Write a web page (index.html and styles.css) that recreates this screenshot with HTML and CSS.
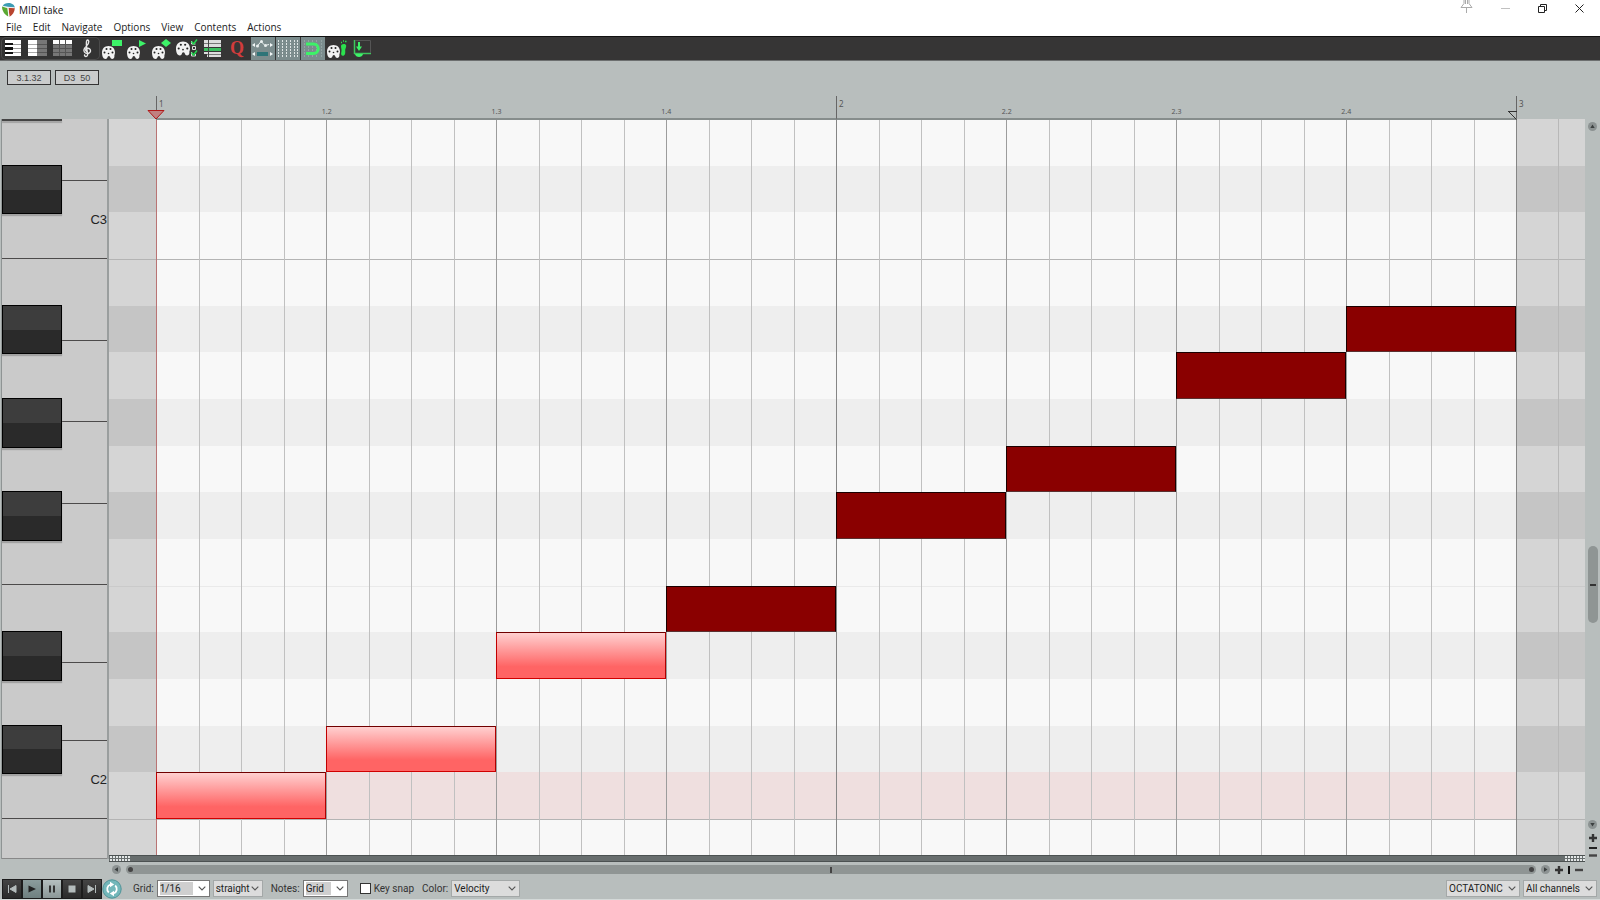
FILE: index.html
```html
<!DOCTYPE html>
<html lang="en">
<head>
    <meta charset="UTF-8">
    <meta name="viewport" content="width=device-width, initial-scale=1.0">
    <title>MIDI take</title>
    <link rel="stylesheet" href="styles.css">
</head>
<body>
    <!-- shared shapes -->
    <svg class="defs" width="0" height="0" aria-hidden="true">
        <symbol id="palette" viewBox="0 0 13 13">
            <path fill="#f2f2f2" d="M6.500 0C10.500 0 13 2.800 13 6.500c0 1.200-.3 2-.6 2.800.2 1.700-.2 3.700-2 3.700-1.600 0-2-1.200-2.400-2.300-.4-.9-1.900-.9-2.300 0C5.300 11.800 5 13 3.500 13 1 13 0 9.500 0 6.500 0 2.800 2.500 0 6.500 0z"/>
            <g fill="#222"><circle cx="4.500" cy="3" r="1"/><circle cx="8.500" cy="3" r="1"/><circle cx="2.500" cy="6.500" r="1"/><circle cx="10.500" cy="6.500" r="1"/><circle cx="6.500" cy="7.500" r=".8"/></g>
        </symbol>
        <symbol id="chevron" viewBox="0 0 8 5">
            <path d="M.7.700 4 4 7.300.7" fill="none" stroke="#555" stroke-width="1.100"/>
        </symbol>
    </svg>

    <header class="titlebar">
        <div class="title">
            <svg width="13" height="14" viewBox="0 0 13 14" aria-hidden="true">
                <path fill="#3c9cb4" d="M.5 3.500C1.500.8 4 0 6.500 0c3 0 6 1.500 6.500 4.800L6 4z"/>
                <path fill="#5aa832" d="M0 3.500 5.500 5l.8 8.500C2.500 11.500 0 8 0 3.500z"/>
                <path fill="#b8442f" d="M6.300 4.800 12.800 5c0 4-2.300 7-5.300 8.700z"/>
                <path d="M.8 3.300 6 4.300l6.800.5M6 4.300l.9 9" fill="none" stroke="#f4f4f4" stroke-width=".9"/>
            </svg>
            <h1>MIDI take</h1>
        </div>
        <div class="window-buttons">
            <button aria-label="Pin">
                <svg width="13" height="14" viewBox="0 0 13 14"><path d="M4 0v3.500L1 7.500h11L9 3.500V0M5.500 0v4M7.500 0v4M6.500 8v5" fill="none" stroke="#aaa"/></svg>
            </button>
            <button aria-label="Minimize">
                <svg width="9" height="9" viewBox="0 0 9 9"><path d="M0 4.500h9" stroke="#c0c0c0"/></svg>
            </button>
            <button aria-label="Restore">
                <svg width="9" height="9" viewBox="0 0 9 9"><path d="M.5 2.500h6v6h-6zM2.500 2V.500h6v6H7" fill="none" stroke="#222"/></svg>
            </button>
            <button aria-label="Close">
                <svg width="9" height="9" viewBox="0 0 9 9"><path d="M.5.500l8 8M8.500.500l-8 8" stroke="#222"/></svg>
            </button>
        </div>
    </header>

    <nav class="menu">
        <a href="#">File</a>
        <a href="#">Edit</a>
        <a href="#">Navigate</a>
        <a href="#">Options</a>
        <a href="#">View</a>
        <a href="#">Contents</a>
        <a href="#">Actions</a>
    </nav>

    <div class="toolbar">
        <div class="tool-group">
            <button aria-label="Piano roll">
                <svg width="24" height="24" viewBox="0 0 24 24"><path fill="#fff" d="M4 3h16v16H4z"/><path d="M4 7.500h16M4 11.500h16M4 15.500h16" stroke="#999"/><path fill="#111" d="M4 6h8v2H4zM4 10h8v3H4zM4 15h8v2H4z"/></svg>
            </button>
            <button aria-label="Named notes">
                <svg width="24" height="24" viewBox="0 0 24 24"><path fill="#fff" d="M2 3h9v16H2z"/><path fill="#777" d="M11 3h10v16H11z"/><path d="M2 7.500h9M2 11.500h9M2 15.500h9" stroke="#aaa"/><path d="M11 7.500h10M11 11.500h10M11 15.500h10" stroke="#555"/></svg>
            </button>
            <button aria-label="Event list">
                <svg width="24" height="24" viewBox="0 0 24 24"><path fill="#fff" d="M2 3h19v4H2z"/><path fill="#777" d="M2 7h19v12H2z"/><path d="M2 7.500h19M2 11.500h19M2 15.500h19M8.500 3v16M14.500 3v16" stroke="#555"/></svg>
            </button>
            <button aria-label="Musical notation">
                <svg width="24" height="24" viewBox="0 0 24 24"><path d="M10.500 14.500c-1.500-.8-1-3 .8-3.200 2-.2 3.400 1.200 3.200 2.900-.3 1.900-2.800 2.900-4.700 2-2.300-1-2.400-3.700-.8-5.500 1.600-1.800 4-3.500 3.800-6.200-.2-2-1.500-2-2.200-.5-.8 2 .4 9 .9 12.500.3 2-.4 3-1.500 3-1 0-1.600-.7-1.400-1.500" fill="none" stroke="#e8e8e8" stroke-width="1.400" stroke-linecap="round"/></svg>
            </button>
        </div>
        <button aria-label="Color notes">
            <svg width="24" height="24" viewBox="0 0 24 24"><use href="#palette" x="1" y="9" width="13" height="13"/><path fill="#3df268" d="M11 3h10v6H11z"/></svg>
        </button>
        <button aria-label="Color by take">
            <svg width="24" height="24" viewBox="0 0 24 24"><use href="#palette" x="1" y="9" width="13" height="13"/><path fill="#3df268" d="M13 3l7 3.500-7 3.500z"/></svg>
        </button>
        <button aria-label="Color by velocity">
            <svg width="24" height="24" viewBox="0 0 24 24"><use href="#palette" x="1" y="9" width="13" height="13"/><path fill="#3df268" d="M15 2l5 4-5 4-5-4z"/></svg>
        </button>
        <button aria-label="Color options">
            <svg width="24" height="24" viewBox="0 0 24 24"><use href="#palette" x="0" y="4" width="14" height="15"/><path d="M16.500 9.500h3v3h-3zM15.500 15v4h4v-2M15.500 4v3h4" fill="none" stroke="#ddd"/><path d="M15.500 4.500l2 2.500L21 2.500M15.500 15.500l2 2.500 3.500-4.500" fill="none" stroke="#25d750" stroke-width="1.500"/></svg>
        </button>
        <button aria-label="Note rows">
            <svg width="24" height="24" viewBox="0 0 24 24"><path fill="#ddd" d="M3 3h17v3H3zM3 7h17v3H3zM3 15h17v2H3zM6 17h14v3H6z"/><path fill="#3cbf60" d="M3 11h17v3H3z"/><path d="M3 6.500h17M6 17.500h14" stroke="#777"/><path d="M7.500 3v17" stroke="#444"/></svg>
        </button>
        <button class="quantize" aria-label="Quantize">Q</button>
        <button class="active" aria-label="Envelope lanes">
            <svg width="24" height="24" viewBox="0 0 24 24"><path d="M6 9.500l4-5 4 4 4-1" fill="none" stroke="#e8eeee"/><circle cx="6.500" cy="9" r="1.500" fill="#e8eeee"/><circle cx="10.500" cy="4.500" r="1.500" fill="#e8eeee"/><circle cx="14.500" cy="8.500" r="1.500" fill="#e8eeee"/><path fill="#f4f8f8" d="M1 8l3-2v4zM22 8l-3-2v4zM1 17l3-2v4zM22 17l-3-2v4z"/><path fill="#2d7478" d="M6 15h11v4H6z"/></svg>
        </button>
        <button class="active" aria-label="Grid">
            <svg width="24" height="24" viewBox="0 0 24 24"><path d="M2.500 3v18M6.500 3v18M10.500 3v18M14.500 3v18M18.500 3v18M21.500 3v18" stroke="#dde4e4" stroke-dasharray="2 1"/></svg>
        </button>
        <button class="active" aria-label="Snap">
            <svg width="24" height="24" viewBox="0 0 24 24"><path d="M3.500 3v18M7.500 3v18M11.500 3v18M15.500 3v18M20.500 3v18" stroke="#93a4a4" stroke-dasharray="2 1"/><path d="M5 7h7.500a4.700 4.700 0 0 1 0 9.500H5" fill="none" stroke="#3df268" stroke-width="3"/></svg>
        </button>
        <button aria-label="Step color">
            <svg width="24" height="24" viewBox="0 0 24 24"><use href="#palette" x="1" y="8" width="13" height="13"/><path fill="#2be04e" d="M15 9c0-2.500 5-3 5.200-.3.100 2-1.200 3-1 5 .3 2.500-.2 5-2.200 5.100-2 0-2.200-2-1.600-4 .5-2-.4-3.800-.4-5.800z"/><path d="M15 5.500h1M17 4h1M19 4.500h1.500" stroke="#2be04e" stroke-width="1.500"/></svg>
        </button>
        <button aria-label="Step input">
            <svg width="24" height="24" viewBox="0 0 24 24"><path d="M3.500 3v14M3 16.500h17" stroke="#3cc85c" stroke-width="1.500"/><path d="M4 3.500h15.500V16" fill="none" stroke="#555"/><path d="M8 5v5" stroke="#3df268" stroke-width="2"/><path fill="#3df268" d="M5 9.500h6L8 14zM4 17h8c-.5 4-7.500 4-8 0z"/></svg>
        </button>
    </div>

    <div class="info">
        <output>3.1.32</output>
        <output>D3&nbsp; 50</output>
    </div>

    <div class="ruler">
        <div class="bar first">
            <svg class="marker" width="18" height="10" viewBox="0 0 18 10" aria-hidden="true"><path d="M1 .500h16L9 9z" fill="#c08080" stroke="#b01818"/></svg>
            <span class="bar-no">1</span>
            <span class="beat-no">1.2</span>
            <span class="beat-no">1.3</span>
            <span class="beat-no">1.4</span>
        </div>
        <div class="bar">
            <span class="bar-no">2</span>
            <span class="beat-no">2.2</span>
            <span class="beat-no">2.3</span>
            <span class="beat-no">2.4</span>
        </div>
        <div class="bar last">
            <svg class="marker end" width="9" height="9" viewBox="0 0 9 9" aria-hidden="true"><path d="M0 .500h9M.5.500l8 8" fill="none" stroke="#333"/></svg>
            <span class="bar-no">3</span>
        </div>
    </div>

    <main class="editor">
        <div class="keyboard">
            <div class="white-keys">
                <div class="key d top"></div>
                <div class="key c">C3</div>
                <div class="key b"></div>
                <div class="key b"></div>
                <div class="key b"></div>
                <div class="key b"></div>
                <div class="key d"></div>
                <div class="key d"></div>
                <div class="key c">C2</div>
                <div class="key rest"></div>
            </div>
            <div class="black-keys">
                <i class="row-1 stub"></i>
                <i class="row-2"></i>
                <i class="row-5"></i>
                <i class="row-7"></i>
                <i class="row-9"></i>
                <i class="row-12"></i>
                <i class="row-14"></i>
            </div>
        </div>

        <div class="roll">
            <div class="lanes">
                <div class="lane"></div>
                <div class="lane sharp"></div>
                <div class="lane"></div>
                <div class="lane octave"></div>
                <div class="lane sharp"></div>
                <div class="lane"></div>
                <div class="lane sharp"></div>
                <div class="lane"></div>
                <div class="lane sharp"></div>
                <div class="lane"></div>
                <div class="lane split"></div>
                <div class="lane sharp"></div>
                <div class="lane"></div>
                <div class="lane sharp"></div>
                <div class="lane root"><span></span></div>
                <div class="lane octave"></div>
            </div>
            <div class="beats">
                <div class="beat cursor"><i></i><i></i><i></i><i></i></div>
                <div class="beat"><i></i><i></i><i></i><i></i></div>
                <div class="beat"><i></i><i></i><i></i><i></i></div>
                <div class="beat"><i></i><i></i><i></i><i></i></div>
                <div class="beat measure"><i></i><i></i><i></i><i></i></div>
                <div class="beat"><i></i><i></i><i></i><i></i></div>
                <div class="beat"><i></i><i></i><i></i><i></i></div>
                <div class="beat"><i></i><i></i><i></i><i></i></div>
                <div class="beat measure tail"><i></i><i></i></div>
            </div>
            <div class="notes">
                <div class="note selected row-15 beat-1"></div>
                <div class="note selected row-14 beat-2"></div>
                <div class="note selected row-12 beat-3"></div>
                <div class="note row-11 beat-4"></div>
                <div class="note row-9 beat-5"></div>
                <div class="note row-8 beat-6"></div>
                <div class="note row-6 beat-7"></div>
                <div class="note row-5 beat-8"></div>
            </div>
        </div>

        <div class="vscroll">
            <button class="round" aria-label="Scroll up"><svg width="9" height="9" viewBox="0 0 9 9"><path d="M4.500 2.500l2.200 3.500H2.300z" fill="#3c4040"/></svg></button>
            <div class="vtrack"><div class="vthumb"></div></div>
            <button class="round" aria-label="Scroll down"><svg width="9" height="9" viewBox="0 0 9 9"><path d="M4.500 6.500l2.200-3.500H2.300z" fill="#3c4040"/></svg></button>
            <button aria-label="Zoom in vertically"><svg width="8" height="8" viewBox="0 0 8 8"><path d="M4 0v8M0 4h8" stroke="#333" stroke-width="2.400"/></svg></button>
            <i class="hbar"></i>
            <button aria-label="Zoom out vertically"><svg width="8" height="3" viewBox="0 0 8 3"><path d="M0 1.500h8" stroke="#444" stroke-width="2.400"/></svg></button>
        </div>

        <div class="divider"><i></i><i></i></div>
    </main>

    <div class="hscroll">
        <button class="round" aria-label="Scroll left"><svg width="9" height="9" viewBox="0 0 9 9"><path d="M2.500 4.500L6 2.300v4.400z" fill="#3c4040"/></svg></button>
        <div class="hthumb"><i class="dot"></i><i class="mid"></i><i class="dot"></i></div>
        <button class="round" aria-label="Scroll right"><svg width="9" height="9" viewBox="0 0 9 9"><path d="M6.500 4.500L3 2.300v4.400z" fill="#3c4040"/></svg></button>
        <button aria-label="Zoom in"><svg width="8" height="8" viewBox="0 0 8 8"><path d="M4 0v8M0 4h8" stroke="#333" stroke-width="2.400"/></svg></button>
        <i class="vbar"></i>
        <button aria-label="Zoom out"><svg width="8" height="8" viewBox="0 0 8 8"><path d="M0 4h8" stroke="#444" stroke-width="2.400"/></svg></button>
    </div>

    <footer class="bottom">
        <div class="transport">
            <button aria-label="Go to start"><svg width="10" height="10" viewBox="0 0 10 10"><path d="M1.500 1v8M9 1.500v7L3 5z" fill="#b4bcbc" stroke="#b4bcbc"/></svg></button>
            <button class="lit" aria-label="Play"><svg width="10" height="10" viewBox="0 0 10 10"><path d="M1.500 1.500v7L9 5z" fill="#222"/></svg></button>
            <button class="lit light" aria-label="Pause"><svg width="10" height="10" viewBox="0 0 10 10"><path d="M3 1.500v7M7 1.500v7" stroke="#333" stroke-width="2"/></svg></button>
            <button aria-label="Stop"><svg width="10" height="10" viewBox="0 0 10 10"><path d="M1.500 1.500h7v7h-7z" fill="#b4bcbc"/></svg></button>
            <button aria-label="Go to end"><svg width="10" height="10" viewBox="0 0 10 10"><path d="M8.500 1v8M1 1.500v7L7 5z" fill="#b4bcbc" stroke="#b4bcbc"/></svg></button>
            <button class="repeat" aria-label="Repeat"><svg width="20" height="20" viewBox="0 0 20 20"><circle cx="10" cy="10" r="9.200" fill="#73b7ba" stroke="#4f9498"/><path d="M6.800 13.500A4.700 4.700 0 0 1 8.500 5.500M13.200 6.500A4.700 4.700 0 0 1 11.500 14.500" fill="none" stroke="#fff" stroke-width="1.800"/><path fill="#fff" d="M8 2.800l4.200 2.600L8 8.200zM12 17.200l-4.200-2.600L12 11.800z"/></svg></button>
        </div>

        <label for="grid">Grid:</label>
        <span class="select white w-grid"><select id="grid"><option>1/16</option></select><svg><use href="#chevron"/></svg></span>
        <span class="select w-type"><select aria-label="Grid type"><option>straight</option></select><svg><use href="#chevron"/></svg></span>
        <label class="notes-label" for="length">Notes:</label>
        <span class="select white w-notes"><select id="length"><option>Grid</option></select><svg><use href="#chevron"/></svg></span>
        <input type="checkbox" id="keysnap">
        <label for="keysnap">Key snap</label>
        <label class="color-label" for="color">Color:</label>
        <span class="select w-color"><select id="color"><option>Velocity</option></select><svg><use href="#chevron"/></svg></span>

        <span class="select scale w-scale"><select aria-label="Scale"><option>OCTATONIC</option></select><svg><use href="#chevron"/></svg></span>
        <span class="select w-channel"><select aria-label="Channel"><option>All channels</option></select><svg><use href="#chevron"/></svg></span>
    </footer>
</body>
</html>
```

FILE: styles.css
```css
:root {
    --keys: 109px;
    --lead: 47px;
    --tail: 69px;
    --side: 15px;
    --rows: repeat(15, 140fr) 108fr;
}

* {
    box-sizing: border-box;
}

body {
    margin: 0;
    min-height: 100vh;
    display: flex;
    flex-direction: column;
    background-color: #b8bebd;
    font-family: Roboto, "Liberation Sans", sans-serif;
    font-size: 10px;
    color: #222;
}

button {
    display: flex;
    align-items: center;
    justify-content: center;
    padding: 0;
    border: 0;
    background: none;
}

svg {
    display: block;
}

.defs {
    position: absolute;
}

/* Title and menu */
.titlebar {
    display: flex;
    justify-content: space-between;
    height: 20px;
    background-color: #fff;
}

.title {
    display: flex;
    align-items: center;
    gap: 4px;
    padding-left: 2px;
}

.title h1 {
    margin: 0;
    font: 10px "Open Sans", sans-serif;
    color: #111;
}

.window-buttons {
    display: flex;
    align-items: flex-start;
    gap: 28px;
    padding-right: 16px;
}

.window-buttons button {
    height: 17px;
}

.window-buttons button:first-child {
    height: 13px;
}

.menu {
    display: flex;
    gap: 11px;
    height: 16px;
    padding-left: 6px;
    background-color: #fff;
    font: 10px/15px "Open Sans", sans-serif;
}

.menu a {
    color: #222;
    text-decoration: none;
}

/* Toolbar */
.toolbar {
    display: flex;
    gap: 1px;
    height: 25px;
    padding-left: 1px;
    border-top: 1px solid #111;
    border-bottom: 1px solid #6c6f6f;
    background-color: #363535;
}

.tool-group {
    display: flex;
    gap: 1px;
    border-radius: 5px;
    background-color: #333;
    box-shadow: inset 0 0 0 1px #4b4b4b;
}

.toolbar button {
    width: 24px;
    height: 23px;
}

.toolbar .active {
    background-color: #7b8c8d;
}

.toolbar .quantize {
    padding-right: 2px;
    font: bold 18px "Liberation Serif", serif;
    color: #d23c3c;
}

/* Position readout */
.info {
    display: flex;
    gap: 4px;
    padding: 9px 7px 0;
    height: 35px;
}

.info output {
    width: 44px;
    height: 15px;
    border: 1px solid #333;
    background-color: #cacccc;
    font: 9px/14px "Liberation Sans", sans-serif;
    text-align: center;
    color: #444;
}

/* Ruler */
.ruler {
    display: grid;
    grid-template-columns: 1fr 1fr calc(var(--tail) + var(--side));
    height: 23px;
    margin-left: calc(var(--keys) + var(--lead));
    font: 8px "Noto Sans", sans-serif;
    color: #555;
}

.bar {
    position: relative;
    display: grid;
    grid-template-columns: repeat(4, 1fr);
    border-left: 1px solid #666;
    border-bottom: 2px solid #868d8c;
}

.bar.last {
    border-bottom-color: transparent;
}

.bar-no {
    padding-left: 2px;
    line-height: 16px;
}

.beat-no {
    justify-self: start;
    transform: translateX(-50%);
    padding-top: 10px;
    font-size: 7px;
    line-height: 12px;
}

.marker {
    position: absolute;
    left: -10px;
    bottom: -2px;
}

.marker.end {
    left: -9px;
}

/* Editor */
.editor {
    flex: 1;
    display: grid;
    grid-template-columns: var(--keys) 1fr var(--side);
    grid-template-rows: 1fr 7px;
}

.keyboard {
    grid-row: 1 / 3;
    display: grid;
    margin: 0 0 3px 1px;
    border-left: 1px solid #8f9494;
    border-right: 2px solid #9a9e9e;
    background-color: #cacaca;
}

.white-keys,
.black-keys {
    grid-area: 1 / 1;
}

.white-keys {
    display: flex;
    flex-direction: column;
}

.key {
    display: flex;
    align-items: center;
    justify-content: flex-end;
    border-top: 1px solid #4c4a4a;
    font: 13px "Liberation Sans", sans-serif;
}

.key.b {
    flex: 245 0 0;
}

.key.c {
    flex: 234 0 0;
}

.key.d {
    flex: 233 0 0;
}

.key.top {
    flex-grow: 186;
    border-top: 0;
}

.key.rest {
    flex: 120 0 0;
    border-bottom: 1px solid #888;
}

.black-keys {
    display: grid;
    width: 60px;
    grid-template-rows: repeat(15, 140fr) 120fr;
}

.black-keys i {
    margin: -1px 0 -2px;
    border: 1px solid #000;
    background: linear-gradient(#3d3d3d 50%, #2a2a2a 50%);
    box-shadow: 0 2px 1px #a2a2a2;
}

.black-keys .stub {
    height: 2px;
    margin: 0;
    border-color: #444;
}

.roll {
    display: grid;
    background-color: #f8f8f8;
}

.lanes,
.beats,
.notes {
    grid-area: 1 / 1;
    display: grid;
}

.lanes,
.notes {
    grid-template-rows: var(--rows);
}

.lane {
    display: grid;
    grid-template-columns: var(--lead) 1fr var(--tail);
}

.lane::before,
.lane::after {
    content: "";
    background-color: #d5d5d5;
}

.lane::after {
    grid-column: 3;
}

.lane.sharp {
    background-color: #eee;
}

.lane.sharp::before,
.lane.sharp::after {
    background-color: #c5c5c5;
}

.lane.octave {
    border-top: 1px solid #b4b4b4;
}

.lane.split {
    border-top: 1px solid #eaeaea;
}

.lane.split::before,
.lane.split::after {
    margin-top: -1px;
    border-top: 1px solid #cacaca;
}

.lane.root span {
    background-color: #efdfdf;
}

.beats {
    grid-template-columns: repeat(8, 1fr) var(--tail);
    margin-left: var(--lead);
}

.beat {
    display: grid;
    grid-template-columns: repeat(4, 1fr);
}

.beat i {
    border-left: 1px solid #c0c0c0;
}

.beat i:first-child {
    border-color: #9c9c9c;
}

.beat.measure i:first-child {
    border-color: #868686;
}

.beat.cursor i:first-child {
    border-color: #b97474;
}

.beat.tail {
    grid-template-columns: 42px 1fr;
}

.beat.tail i:last-child {
    border-color: #b8b8b8;
}

.notes {
    grid-template-columns: repeat(8, 1fr);
    margin: 0 var(--tail) 0 var(--lead);
}

.note {
    border: 1px solid #1a0000;
    border-bottom-color: #5a3030;
    background-color: #8a0000;
}

.note.selected {
    border-color: #700000 #b00000 #d00000 #c00000;
    background: linear-gradient(#ffd0d0, #ff6464 75%);
}

.row-1 { grid-row: 1; }
.row-2 { grid-row: 2; }
.row-5 { grid-row: 5; }
.row-6 { grid-row: 6; }
.row-7 { grid-row: 7; }
.row-8 { grid-row: 8; }
.row-9 { grid-row: 9; }
.row-11 { grid-row: 11; }
.row-12 { grid-row: 12; }
.row-14 { grid-row: 14; }
.row-15 { grid-row: 15; }

.beat-1 { grid-column: 1; }
.beat-2 { grid-column: 2; }
.beat-3 { grid-column: 3; }
.beat-4 { grid-column: 4; }
.beat-5 { grid-column: 5; }
.beat-6 { grid-column: 6; }
.beat-7 { grid-column: 7; }
.beat-8 { grid-column: 8; }

.divider {
    grid-area: 2 / 2;
    display: flex;
    justify-content: space-between;
    border-top: 1px solid #4c5252;
    border-bottom: 1px solid #4c5252;
    background-color: #686e6e;
}

.divider i {
    width: 21px;
    background:
        linear-gradient(#686e6e, #686e6e) center / 100% 1px no-repeat,
        repeating-linear-gradient(90deg, #686e6e 0 1px, #e4e8e8 1px 3px);
}

/* Scrollbars */
.round {
    width: 9px;
    height: 9px;
    border-radius: 50%;
    background-color: #8c9292;
}

.vscroll {
    grid-area: 1 / 3 / 3;
    display: flex;
    flex-direction: column;
    align-items: center;
    gap: 5px;
    padding: 3px 0 5px;
}

.vtrack {
    flex: 1;
    display: flex;
    flex-direction: column;
    justify-content: flex-end;
    padding-bottom: 192px;
}

.vthumb {
    width: 10px;
    height: 77px;
    border-radius: 5px;
    background: linear-gradient(#333, #333) center / 6px 2px no-repeat #8f9594;
}

.hbar {
    width: 8px;
    height: 2px;
    background-color: #222;
}

.vbar {
    width: 2px;
    height: 8px;
    background-color: #111;
}

.hscroll {
    display: flex;
    align-items: center;
    gap: 5px;
    height: 15px;
    padding: 0 17px 0 112px;
}

.hthumb {
    flex: 1;
    display: flex;
    align-items: center;
    justify-content: space-between;
    height: 9px;
    padding: 0 2px;
    border-radius: 5px;
    background-color: #8f9594;
}

.dot {
    width: 5px;
    height: 5px;
    border-radius: 50%;
    background-color: #444;
}

.mid {
    width: 2px;
    height: 6px;
    background-color: #444;
}

/* Bottom bar */
.bottom {
    display: flex;
    align-items: center;
    height: 23px;
    padding: 1px 3px 0 2px;
    border-bottom: 1px solid #d4d9d8;
}

.transport {
    display: flex;
    margin-right: 11px;
}

.transport button {
    width: 20px;
    height: 20px;
    border: 1px solid #1c1c1c;
    background: linear-gradient(#444, #2b2b2b);
}

.transport .lit {
    background: linear-gradient(#8b9c9c, #6f8080);
}

.transport .light {
    background: linear-gradient(#b5bfbf, #8b9797);
}

.transport .repeat {
    border: 0;
    background: none;
}

.select {
    display: grid;
    align-items: center;
    height: 17px;
    border: 1px solid #a4a8a8;
    background-color: #dcdcdc;
}

.select select,
.select svg {
    grid-area: 1 / 1;
}

.select select {
    appearance: none;
    width: 100%;
    height: 15px;
    padding: 0 0 0 2px;
    border: 0;
    background: none;
    font: inherit;
    color: #222;
}

.select svg {
    justify-self: end;
    width: 8px;
    height: 5px;
    margin-right: 3px;
    pointer-events: none;
}

.select.white {
    border-color: #777;
    background-color: #fff;
}

.select.white select {
    background: linear-gradient(#cfcfcf, #cfcfcf) 2px 1px / calc(100% - 18px) 13px no-repeat;
}

.bottom label {
    margin-right: 3px;
    color: #333;
}

.w-grid {
    width: 53px;
    margin-right: 3px;
}

.w-type {
    width: 50px;
}

.bottom .notes-label {
    margin-left: 8px;
}

.w-notes {
    width: 45px;
}

.bottom input {
    appearance: none;
    width: 11px;
    height: 11px;
    margin: 0 3px 0 12px;
    border: 1px solid #333;
    background-color: #fff;
}

.bottom .color-label {
    margin-left: 5px;
}

.w-color {
    width: 69px;
}

.scale {
    margin-left: auto;
    margin-right: 3px;
}

.w-scale {
    width: 74px;
}

.w-channel {
    width: 74px;
}
```
